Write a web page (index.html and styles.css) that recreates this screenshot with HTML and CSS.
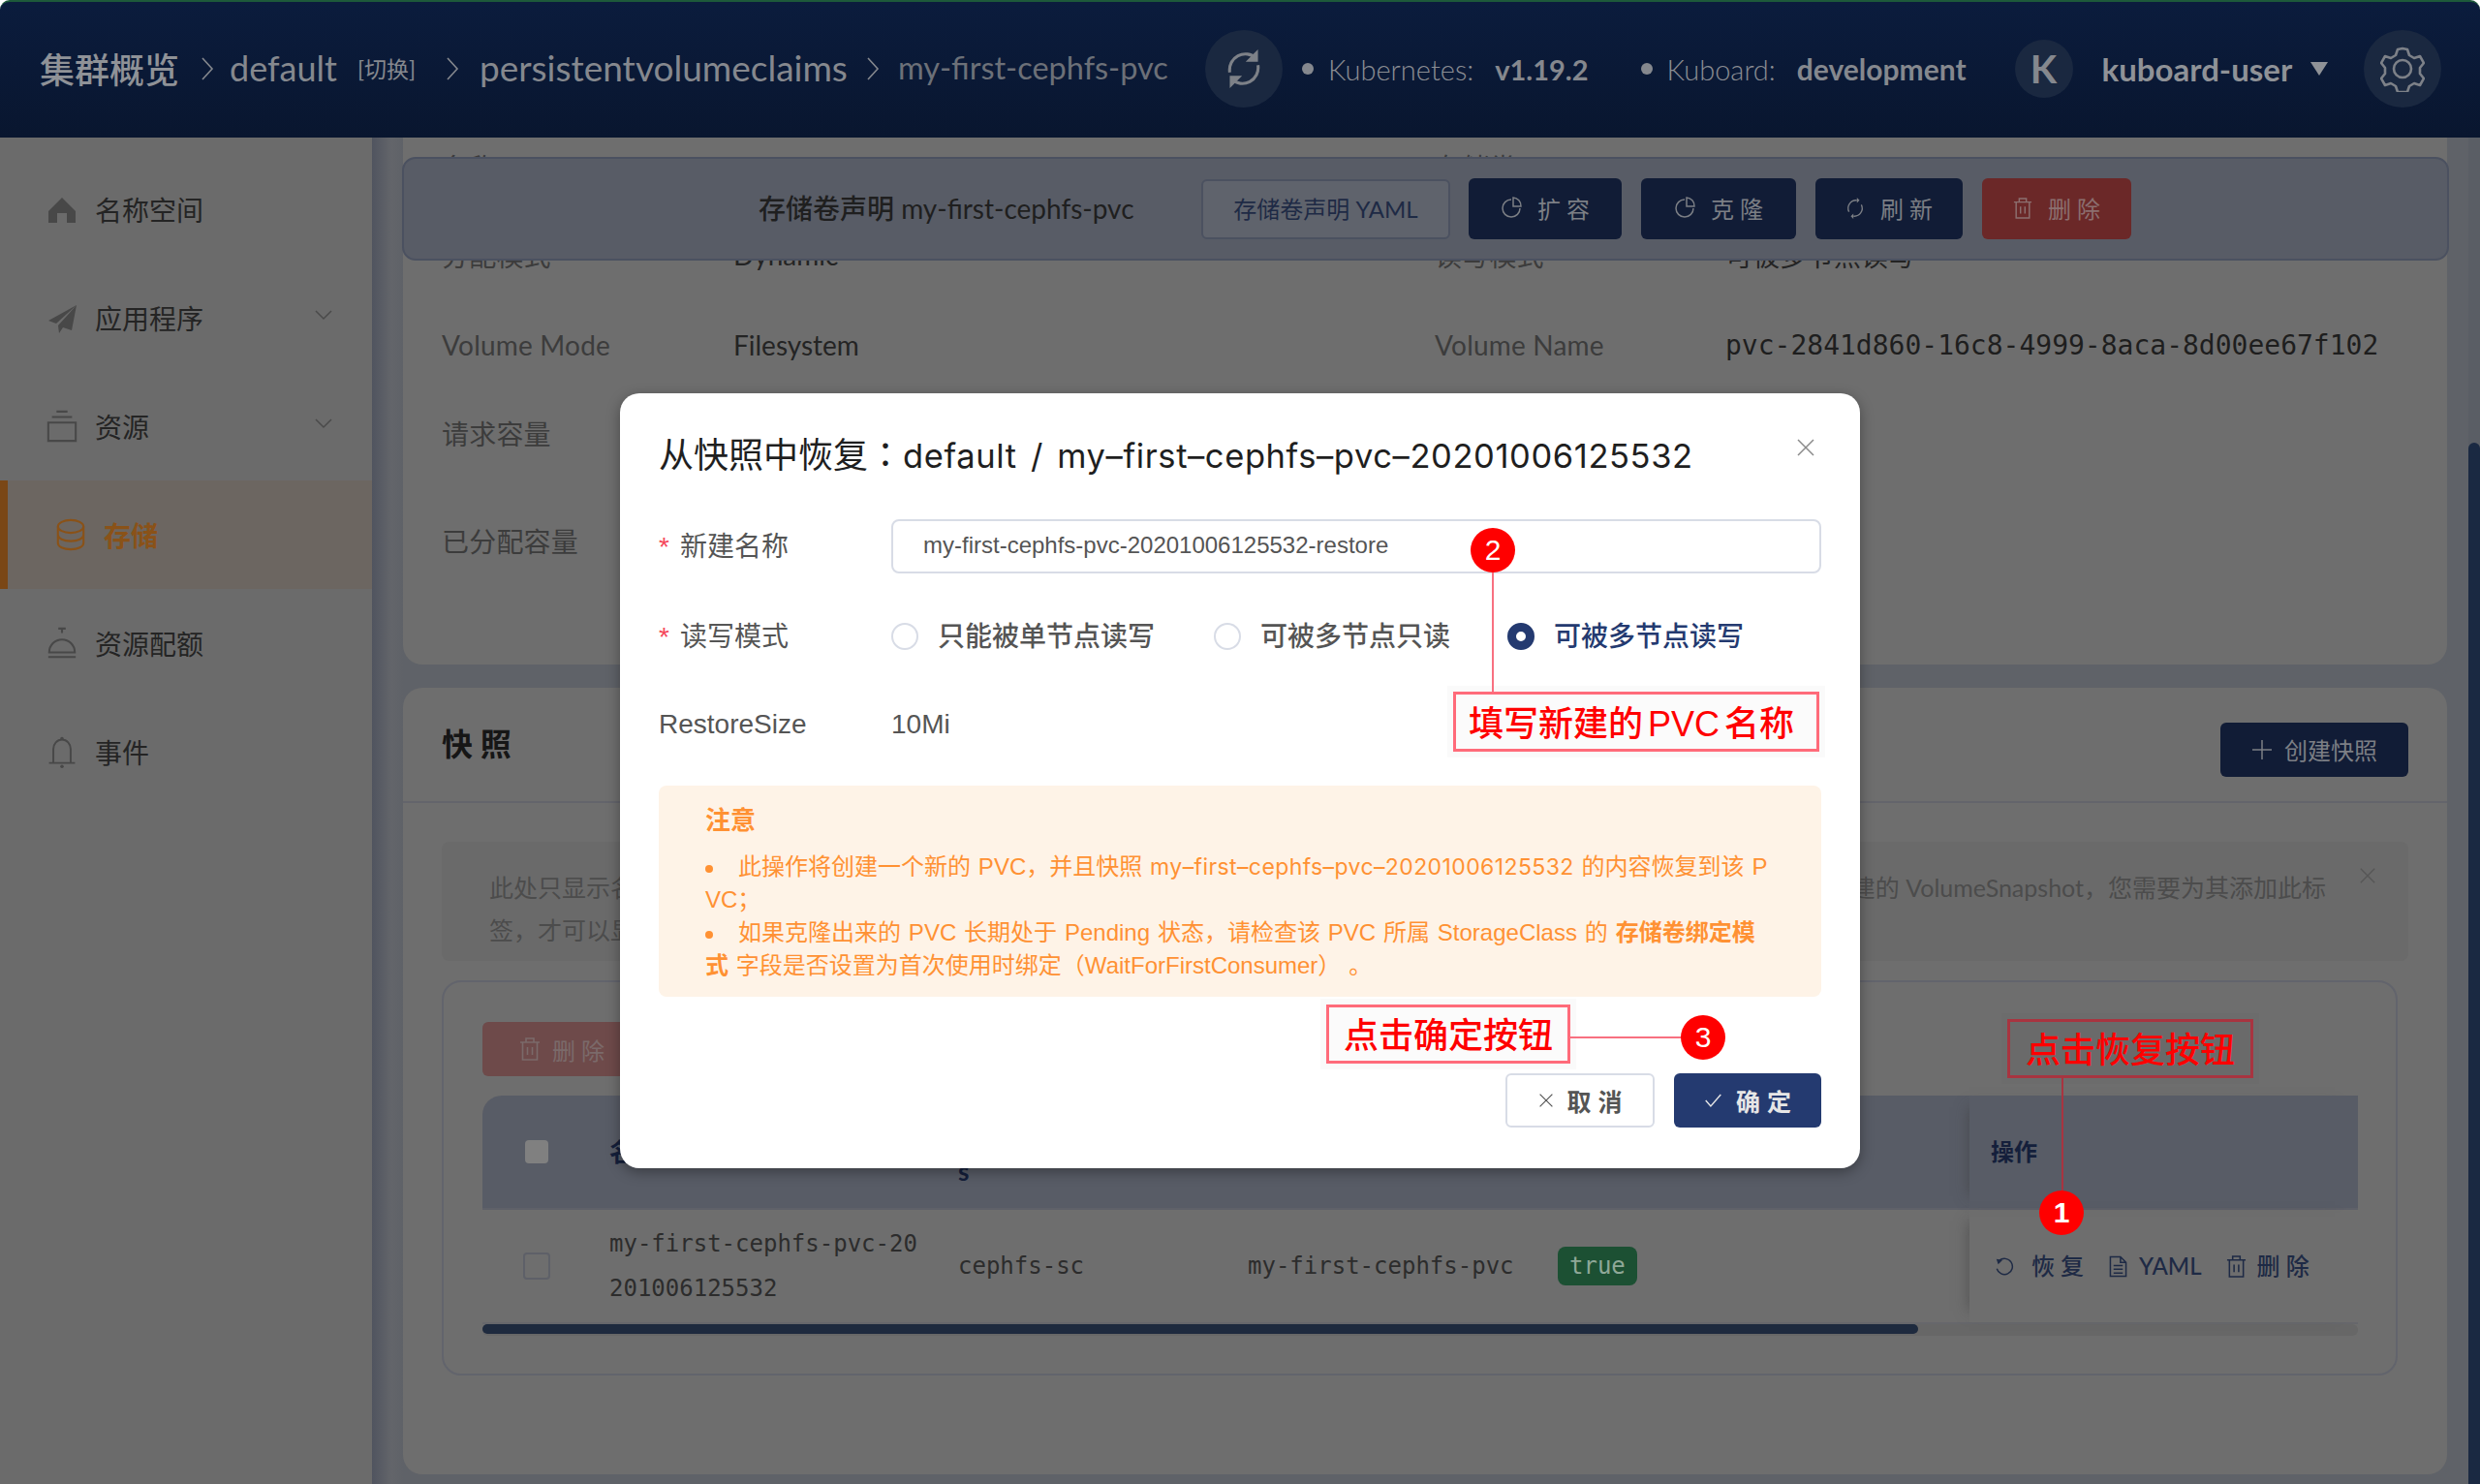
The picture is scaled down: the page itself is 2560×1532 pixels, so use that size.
FILE: index.html
```html
<!DOCTYPE html>
<html>
  <head>
    <title>存储卷声明 my-first-cephfs-pvc</title>
    <link rel="stylesheet" href="styles.css">
  </head>
  <body>
    <svg class="defs" width="0" height="0">
      <symbol id="i-chevron" viewBox="0 0 14 28"><path d="M2 3l10 11L2 25" fill="none" stroke="currentColor" stroke-width="1.6"/></symbol>
      <symbol id="i-down" viewBox="0 0 20 12"><path d="M2 2l8 8 8-8" fill="none" stroke="currentColor" stroke-width="1.5"/></symbol>
      <symbol id="i-pie" viewBox="0 0 22 24"><path d="M11 3a9 9 0 1 0 9 9" fill="none" stroke="currentColor" stroke-width="1.5"/><path d="M13 1v9h8a8.500 8.500 0 0 0-8-9z" fill="none" stroke="currentColor" stroke-width="1.5"/></symbol>
      <symbol id="i-sync" viewBox="0 0 22 24"><path d="M4 16A9 9 0 0 1 13 3M18 8a9 9 0 0 1-9 13" fill="none" stroke="currentColor" stroke-width="1.5"/><path d="M13 0v6l3-3zM9 24v-6l-3 3z" fill="currentColor"/></symbol>
      <symbol id="i-trash" viewBox="0 0 22 26"><path d="M1 6h20M7 6V2h8v4M3.500 6v18h15V6M8.500 11v8M13.500 11v8" fill="none" stroke="currentColor" stroke-width="1.600"/></symbol>
      <symbol id="i-undo" viewBox="0 0 22 22"><path d="M5 5a9 9 0 1 1-2.500 9" fill="none" stroke="currentColor" stroke-width="1.600"/><path d="M2 3l7 1-5 5z" fill="currentColor"/></symbol>
      <symbol id="i-doc" viewBox="0 0 20 24"><path d="M1.500 1.500h11l6 6v15h-17zM12.500 1.500v6h6M5 11h10M5 15h10M5 19h10" fill="none" stroke="currentColor" stroke-width="1.600"/></symbol>
      <symbol id="i-close" viewBox="0 0 20 20"><path d="M2 2l16 16M18 2L2 18" fill="none" stroke="currentColor" stroke-width="1.500"/></symbol>
    </svg>

    <header class="topbar">
      <span class="crumb crumb-home">集群概览</span>
      <svg class="sep"><use href="#i-chevron"/></svg>
      <span class="crumb crumb-ns">default</span>
      <span class="crumb crumb-switch">[切换]</span>
      <svg class="sep sep-two"><use href="#i-chevron"/></svg>
      <span class="crumb crumb-kind">persistentvolumeclaims</span>
      <svg class="sep sep-three"><use href="#i-chevron"/></svg>
      <span class="crumb crumb-name">my-first-cephfs-pvc</span>
      <span class="round-btn refresh">
        <svg width="40" height="44" viewBox="0 0 22 24"><path d="M3 14A9 9 0 0 1 18 6M19 10a9 9 0 0 1-15 8" fill="none" stroke="currentColor" stroke-width="1.700"/><path d="M19 1v7h-7zM3 23v-7h7z" fill="currentColor"/></svg>
      </span>
      <span class="dot dot-one"></span>
      <span class="stat-label">Kubernetes:</span>
      <span class="stat-value">v1.19.2</span>
      <span class="dot dot-two"></span>
      <span class="stat-label">Kuboard:</span>
      <span class="stat-value stat-big">development</span>
      <span class="avatar">K</span>
      <span class="user">kuboard-user</span>
      <span class="caret"></span>
      <span class="round-btn gear">
        <svg width="46" height="48" viewBox="0 0 46 48"><path d="M23 3l5 1 2 6 5 3 6-2 4 7-4 5v6l4 5-4 7-6-2-5 3-2 6H18l-2-6-5-3-6 2-4-7 4-5v-6l-4-5 4-7 6 2 5-3 2-6z" fill="none" stroke="currentColor" stroke-width="2.600" stroke-linejoin="round"/><circle cx="23" cy="24" r="9" fill="none" stroke="currentColor" stroke-width="2.600"/></svg>
      </span>
    </header>

    <div class="layout">
      <aside class="sidebar">
        <div class="nav-item">
          <svg class="nav-icon" viewBox="0 0 32 32"><path d="M16 4l14 14v12H21V20H11v10H2V18z" fill="currentColor"/></svg>
          <span>名称空间</span>
        </div>
        <div class="nav-item">
          <svg class="nav-icon" viewBox="0 0 32 32"><path d="M31 3L2 19l8 3zM31 3L12 24l1 8 4-6 9 3z" fill="currentColor"/></svg>
          <span>应用程序</span>
          <svg class="nav-arrow"><use href="#i-down"/></svg>
        </div>
        <div class="nav-item">
          <svg class="nav-icon" viewBox="0 0 32 36"><path d="M10 2h12M5 8h22M1 14h30v20H1z" fill="none" stroke="currentColor" stroke-width="2.200"/></svg>
          <span>资源</span>
          <svg class="nav-arrow"><use href="#i-down"/></svg>
        </div>
        <div class="nav-item nav-active">
          <svg class="nav-icon" viewBox="0 0 32 36"><g fill="none" stroke="currentColor" stroke-width="2.200"><ellipse cx="16" cy="9" rx="14" ry="7"/><path d="M2 9v9c0 4 6 7 14 7s14-3 14-7V9M2 18v9c0 4 6 7 14 7s14-3 14-7v-9"/></g></svg>
          <span>存储</span>
        </div>
        <div class="nav-item">
          <svg class="nav-icon" viewBox="0 0 32 36"><path d="M12 2h8M16 2v5M2 28a14 14 0 0 1 28 0zM1 33h30" fill="none" stroke="currentColor" stroke-width="2.200"/></svg>
          <span>资源配额</span>
        </div>
        <div class="nav-item">
          <svg class="nav-icon" viewBox="0 0 32 38"><path d="M6 32V16a10 11 0 0 1 20 0v16M1 32h30" fill="none" stroke="currentColor" stroke-width="2.200"/><circle cx="16" cy="4" r="2" fill="currentColor"/><circle cx="16" cy="36" r="2" fill="currentColor"/></svg>
          <span>事件</span>
        </div>
      </aside>

      <main class="content">
        <div class="scrolled">
          <section class="card info-card">
            <div class="info-grid">
              <span class="label">名称</span><span class="value">my-first-cephfs-pvc</span>
              <span class="label">存储类</span><span class="value value-far">cephfs-sc</span>
              <span class="label">分配模式</span><span class="value">Dynamic</span>
              <span class="label">读写模式</span><span class="value">可被多节点读写</span>
              <span class="label">Volume Mode</span><span class="value">Filesystem</span>
              <span class="label">Volume Name</span><span class="value value-mono">pvc-2841d860-16c8-4999-8aca-8d00ee67f102</span>
              <span class="label">请求容量</span><span class="value">10Mi</span>
              <span></span><span></span>
              <span class="label">已分配容量</span><span class="value">10Mi</span>
              <span></span><span></span>
            </div>
          </section>

          <section class="card snap-card">
            <div class="snap-head">
              <h2>快 照</h2>
              <button class="btn btn-primary btn-create">
                <svg width="22" height="22" viewBox="0 0 22 22"><path d="M11 1v20M1 11h20" fill="none" stroke="currentColor" stroke-width="1.500"/></svg>
                创建快照
              </button>
            </div>
            <div class="snap-body">
              <div class="alert">
                <svg class="alert-close"><use href="#i-close"/></svg>
                <div class="alert-line"><span>此处只显示名称空间下带有标签的快照，</span><span>创建的 VolumeSnapshot，您需要为其添加此标</span></div>
                <div class="alert-line"><span>签，才可以显示在此列表中。</span></div>
              </div>
              <div class="table-frame">
                <button class="btn btn-faded">
                  <svg width="22" height="26"><use href="#i-trash"/></svg>
                  删 除
                </button>
                <div class="table">
                  <div class="table-row table-head">
                    <span class="cell-check"><span class="check check-head"></span></span>
                    <span>名称</span>
                    <span>StorageClas<br>s</span>
                    <span>PVC</span>
                    <span>ReadyToUse</span>
                    <span class="cell-fixed">操作</span>
                  </div>
                  <div class="table-row table-data">
                    <span class="cell-check"><span class="check"></span></span>
                    <span>my-first-cephfs-pvc-20<br>201006125532</span>
                    <span>cephfs-sc</span>
                    <span>my-first-cephfs-pvc</span>
                    <span><span class="tag">true</span></span>
                    <span class="cell-fixed actions">
                      <a class="act act-undo"><svg width="20" height="20"><use href="#i-undo"/></svg>恢 复</a>
                      <a class="act act-yaml"><svg width="19" height="23"><use href="#i-doc"/></svg>YAML</a>
                      <a class="act act-del"><svg width="21" height="25"><use href="#i-trash"/></svg>删 除</a>
                    </span>
                  </div>
                  <div class="table-scroll"><div class="table-thumb"></div></div>
                </div>
              </div>
            </div>
          </section>
        </div>

        <div class="toolbar">
          <span class="toolbar-title"><b>存储卷声明</b> my-first-cephfs-pvc</span>
          <button class="btn btn-ghost">存储卷声明 YAML</button>
          <button class="btn btn-primary btn-w-expand"><svg width="22" height="24"><use href="#i-pie"/></svg>扩 容</button>
          <button class="btn btn-primary btn-w-clone"><svg width="22" height="24"><use href="#i-pie"/></svg>克 隆</button>
          <button class="btn btn-primary btn-w-refresh"><svg width="20" height="24"><use href="#i-sync"/></svg>刷 新</button>
          <button class="btn btn-danger"><svg width="20" height="24"><use href="#i-trash"/></svg>删 除</button>
        </div>

        <div class="scrollbar"><div class="scrollbar-thumb"></div></div>
      </main>
    </div>

    <div class="dialog">
      <div class="dialog-head">
        <h3>从快照中恢复<span class="title-colon">：</span><span class="snap-name">default / my–first–cephfs–pvc–20201006125532</span></h3>
        <svg class="dialog-close"><use href="#i-close"/></svg>
      </div>
      <div class="form-row row-name">
        <label><i>*</i>新建名称</label>
        <div class="input">my-first-cephfs-pvc-20201006125532-restore</div>
      </div>
      <div class="form-row row-mode">
        <label><i>*</i>读写模式</label>
        <div class="radios">
          <span class="radio radio-first"><span class="radio-dot"></span>只能被单节点读写</span>
          <span class="radio radio-second"><span class="radio-dot"></span>可被多节点只读</span>
          <span class="radio radio-on"><span class="radio-dot"></span>可被多节点读写</span>
        </div>
      </div>
      <div class="form-row row-size">
        <label>RestoreSize</label>
        <div>10Mi</div>
      </div>
      <div class="notice">
        <div class="notice-title">注意</div>
        <div class="notice-text"><span class="bullet"></span>此操作将创建一个新的 PVC，并且快照 <span class="snap-name">my–first–cephfs–pvc–20201006125532</span> 的内容恢复到该 P<br>VC；</div>
        <div class="notice-text"><span class="bullet"></span>如果克隆出来的 PVC 长期处于 Pending 状态，请检查该 PVC 所属 StorageClass 的 <b>存储卷绑定模<br>式</b> 字段是否设置为首次使用时绑定（WaitForFirstConsumer） 。</div>
      </div>
      <div class="dialog-foot">
        <button class="dlg-btn dlg-cancel"><svg width="16" height="16"><use href="#i-close"/></svg>取 消</button>
        <button class="dlg-btn dlg-ok"><svg width="19" height="16" viewBox="0 0 22 18"><path d="M2 9l6 7L20 2" fill="none" stroke="currentColor" stroke-width="1.600"/></svg>确 定</button>
      </div>
    </div>

    <!-- red annotations drawn on top of the screenshot -->
    <div class="note-box note-one">点击恢复按钮</div>
    <div class="note-line line-one"></div>
    <div class="note-num num-one">1</div>
    <div class="note-box note-two">填写新建的 PVC 名称</div>
    <div class="note-line line-two"></div>
    <div class="note-num num-two">2</div>
    <div class="note-box note-three">点击确定按钮</div>
    <div class="note-line line-three"></div>
    <div class="note-num num-three">3</div>
  </body>
</html>
```

FILE: styles.css
```css
* {
  box-sizing: border-box;
}

html,
body {
  height: 100%;
}

body {
  position: relative;
  margin: 0;
  overflow: hidden;
  background: #fff;
  color: #2a2a2a;
  font-family: Lato, "Noto Sans CJK SC", sans-serif;
  font-size: 28px;
}

.defs {
  position: absolute;
}

button {
  font-family: inherit;
}

/* top bar */
.topbar {
  display: flex;
  align-items: center;
  height: 142px;
  padding: 0 0 2px 41px;
  border-top: 2px solid #1d5a3a;
  border-radius: 10px 10px 0 0;
  background: linear-gradient(#0b1c3d, #09162f);
  color: #85888e;
}

.crumb {
  margin-bottom: 3px;
}

.crumb-home {
  font-size: 36px;
  font-weight: 500;
  color: #8f9297;
}

.crumb-ns {
  font-size: 36px;
}

.crumb-kind {
  font-size: 37px;
}

.crumb-name {
  font-size: 32.5px;
  color: #6c7078;
}

.crumb-switch {
  margin-left: 21px;
  font-size: 23px;
}

.sep {
  width: 14px;
  height: 28px;
  margin: 0 16px 0 22px;
  color: #85888e;
}

.sep-two {
  margin: 0 21px 0 31px;
}

.sep-three {
  margin: 0 19px;
}

.round-btn {
  display: flex;
  align-items: center;
  justify-content: center;
  width: 80px;
  height: 80px;
  border-radius: 50%;
  background: #1a2840;
  color: #7d8188;
}

.refresh {
  margin-left: 38px;
}

.gear {
  margin-left: 37px;
}

.dot {
  width: 12px;
  height: 12px;
  margin-right: 15px;
  border-radius: 50%;
  background: #85888e;
}

.dot-one {
  margin-left: 20px;
}

.dot-two {
  margin-left: 54px;
}

.stat-label {
  margin-right: 22px;
  font-size: 29px;
  font-weight: 300;
  color: #8a8d93;
}

.stat-value {
  font-size: 29px;
  font-weight: 700;
}

.stat-big {
  font-size: 30px;
}

.avatar {
  display: flex;
  align-items: center;
  justify-content: center;
  width: 60px;
  height: 60px;
  margin-left: 50px;
  border-radius: 50%;
  background: #1a2840;
  font-size: 40px;
  font-weight: 700;
}

.user {
  margin-left: 30px;
  font-size: 33px;
  font-weight: 700;
  color: #8f9297;
}

.caret {
  width: 0;
  height: 0;
  margin-left: 19px;
  border-top: 14px solid #8f9297;
  border-left: 9px solid transparent;
  border-right: 9px solid transparent;
}

/* page under the bar */
.layout {
  display: flex;
  height: 1390px;
}

.sidebar {
  flex: none;
  width: 384px;
  padding-top: 18px;
  background: #6b6b6b;
  color: #242424;
}

.nav-item {
  display: flex;
  align-items: center;
  height: 112px;
  padding-left: 48px;
}

.nav-icon {
  width: 32px;
  height: 34px;
  margin-right: 18px;
  color: #484848;
}

.nav-arrow {
  width: 20px;
  height: 12px;
  margin-left: auto;
  margin-right: 40px;
  margin-bottom: 6px;
  color: #4a4a4a;
}

.nav-active {
  padding-left: 49px;
  border-left: 8px solid #7a4716;
  background: #6c6661;
  color: #8a5218;
  font-weight: 700;
}

.nav-active .nav-icon {
  color: #8a5218;
}

.content {
  position: relative;
  flex: 1;
  min-width: 0;
  overflow: hidden;
  background: linear-gradient(90deg, #50545f 0, #63656a 20px, #5f6268 32px);
}

.scrolled {
  margin-top: -26px;
  padding: 0 34px 0 32px;
}

.card {
  border-radius: 20px;
  background: #6e6e6e;
}

.info-card {
  height: 570px;
  margin-bottom: 24px;
  padding-left: 40px;
  overflow: hidden;
}

.info-grid {
  display: grid;
  grid-template-columns: 301px 724px 300px 1fr;
  grid-template-rows: 112px 70px 116px 66px 156px;
  align-items: center;
}

.label {
  color: #3c3c3c;
  letter-spacing: 0.2px;
}

.value {
  color: #242424;
}

.value-far {
  padding-left: 46px;
}

.value-mono {
  font-family: "DejaVu Sans Mono", monospace;
  font-size: 28px;
  color: #1e1e1e;
}

.snap-card {
  height: 812px;
}

.snap-head {
  display: flex;
  align-items: center;
  justify-content: space-between;
  height: 119px;
  padding: 0 40px;
  border-bottom: 2px solid #63646b;
}

.snap-head h2 {
  margin: 0 0 6px;
  font-size: 32px;
  font-weight: 700;
  color: #161616;
}

.btn {
  display: inline-flex;
  align-items: center;
  justify-content: center;
  border: 0;
  border-radius: 6px;
  font-size: 24px;
}

.btn-primary {
  height: 60px;
  background: #111c36;
  color: #7c7f85;
}

.btn-primary svg,
.btn-danger svg {
  margin-right: 16px;
}

.btn-create {
  width: 194px;
  height: 56px;
  margin-top: 10px;
  font-size: 24px;
}

.btn-create svg {
  margin-right: 12px;
}

.snap-body {
  padding: 40px 40px 0;
}

.alert {
  position: relative;
  height: 123px;
  padding: 25px 49px 0;
  border-radius: 8px;
  background: #6a6a6a;
  color: #4c4c4c;
  font-size: 25px;
  line-height: 44px;
}

.alert-line {
  display: flex;
  justify-content: space-between;
  padding-right: 36px;
}

.alert-close {
  position: absolute;
  top: 26px;
  right: 33px;
  width: 18px;
  height: 18px;
  color: #565656;
}

.table-frame {
  width: 2019px;
  height: 408px;
  margin-top: 20px;
  padding: 41px 40px 0;
  border: 2px solid #62646c;
  border-radius: 20px;
}

.btn-faded {
  width: 164px;
  height: 56px;
  background: #6e4a4a;
  color: #7b6a6a;
}

.btn-faded svg {
  margin-right: 12px;
}

.table {
  width: 1936px;
  margin-top: 20px;
}

.table-row {
  display: grid;
  grid-template-columns: 131px 360px 299px 320px 1fr 401px;
  align-items: center;
}

.table-head {
  height: 116px;
  border-top-left-radius: 20px;
  background: #585c66;
  color: #141f3b;
  font-size: 26px;
  font-weight: 700;
  line-height: 40px;
}

.table-data {
  height: 120px;
  border-top: 2px solid #5f6169;
  border-bottom: 2px solid #66676b;
  font-family: "DejaVu Sans Mono", monospace;
  font-size: 24px;
  line-height: 46px;
  color: #2c2c2c;
}

.table-data > span,
.table-head > span {
  display: block;
}

.cell-check {
  display: flex !important;
  justify-content: center;
  padding-right: 19px;
}

.check {
  display: block;
  width: 28px;
  height: 28px;
  border: 2px solid #5e6068;
  border-radius: 4px;
}

.check-head {
  width: 24px;
  height: 24px;
  border: 0;
  background: #808080;
}

.cell-fixed {
  align-self: stretch;
  display: flex !important;
  align-items: center;
  padding-left: 22px;
  font-size: 24px;
  box-shadow: -12px 0 14px -12px rgba(60, 60, 60, 0.6);
}

.tag {
  display: inline-block;
  height: 40px;
  padding: 0 12px;
  border-radius: 8px;
  background: #1c5033;
  color: #8fa898;
  line-height: 40px;
}

.actions {
  font-family: Lato, "Noto Sans CJK SC", sans-serif;
  color: #1e2a45;
  font-weight: 500;
}

.act {
  display: inline-flex;
  align-items: center;
}

.act svg {
  margin-right: 12px;
}

.act-undo {
  margin-left: 4px;
}

.act-undo svg {
  margin-right: 18px;
}

.act-yaml {
  margin-left: 26px;
}

.act-del {
  margin-left: 25px;
}

.act-del svg {
  margin-right: 11px;
}

.table-scroll {
  height: 12px;
  border-radius: 6px;
  background: #676767;
}

.table-thumb {
  width: 1482px;
  height: 10px;
  border-radius: 5px;
  background: #1e2a3e;
}

/* sticky bar over the info card */
.toolbar {
  position: absolute;
  top: 20px;
  left: 31px;
  display: flex;
  align-items: center;
  width: 2113px;
  height: 107px;
  padding-left: 366px;
  border: 2px solid #4b5160;
  border-radius: 14px;
  background: #585c66;
}

.toolbar-title {
  width: 457px;
  margin-bottom: 3px;
  font-size: 28px;
  color: #1f1f1f;
  white-space: nowrap;
}

.toolbar-title b {
  font-weight: 500;
}

.toolbar .btn {
  padding-bottom: 3px;
}

.btn-ghost {
  width: 257px;
  height: 62px;
  border: 2px solid #4b5160;
  background: #5f636c;
  color: #1e2a45;
}

.btn-primary.btn-w-expand {
  width: 158px;
  height: 63px;
  margin-left: 19px;
}

.btn-w-clone {
  width: 160px;
  height: 63px;
  margin-left: 20px;
}

.btn-w-refresh {
  width: 152px;
  height: 63px;
  margin-left: 20px;
}

.btn-danger {
  width: 154px;
  height: 63px;
  margin-left: 20px;
  background: #6b2828;
  color: #8c6f6f;
}

.scrollbar {
  position: absolute;
  top: 0;
  right: 0;
  width: 12px;
  height: 100%;
  background: #5a5e65;
}

.scrollbar-thumb {
  height: 1075px;
  margin-top: 315px;
  border-radius: 6px 6px 0 0;
  background: #1a2942;
}

/* dialog */
.dialog {
  position: absolute;
  top: 406px;
  left: 640px;
  width: 1280px;
  height: 800px;
  padding: 0 40px;
  border-radius: 20px;
  background: #fff;
  box-shadow: 0 4px 14px rgba(0, 0, 0, 0.35);
  color: #555;
  font-family: "Liberation Sans", "Noto Sans CJK SC", sans-serif;
}

.dialog-head {
  display: flex;
  align-items: center;
  justify-content: space-between;
  height: 124px;
}

.dialog-head h3 {
  margin: 0 0 3px;
  font-size: 36px;
  font-weight: 400;
  color: #1f1f1f;
  white-space: nowrap;
}

.title-colon {
  font-family: "Noto Sans CJK TC", sans-serif;
}

.snap-name {
  font-family: Inter, "Liberation Sans", sans-serif;
  font-size: 34.5px;
  letter-spacing: 0.6px;
  word-spacing: 4px;
}

.dialog-close {
  width: 20px;
  height: 20px;
  margin-right: 6px;
  margin-bottom: 12px;
  color: #8a8a8a;
}

.form-row {
  display: flex;
  align-items: center;
  height: 56px;
}

.form-row label {
  width: 240px;
  margin-bottom: 4px;
}

.form-row i {
  margin-right: 11px;
  color: #f5475b;
  font-style: normal;
}

.row-name {
  margin-top: 6px;
}

.row-mode {
  margin-top: 37px;
}

.row-size {
  margin-top: 35px;
}

.row-size label {
  margin-bottom: 0;
}

.input {
  width: 960px;
  height: 56px;
  padding-left: 31px;
  border: 2px solid #d8dce6;
  border-radius: 8px;
  font-size: 24px;
  line-height: 50px;
}

.radios {
  display: flex;
  margin-bottom: 4px;
  font-weight: 500;
}

.radio {
  display: flex;
  align-items: center;
  white-space: nowrap;
}

.radio-dot {
  width: 28px;
  height: 28px;
  margin-top: 4px;
  margin-right: 20px;
  border: 2px solid #d8dce6;
  border-radius: 50%;
}

.radio-second {
  margin-left: 61px;
}

.radio-on {
  margin-left: 59px;
  color: #243a70;
}

.radio-on .radio-dot {
  border: 9px solid #243a70;
}

.notice {
  height: 218px;
  margin-top: 35px;
  padding: 19px 48px 0;
  border-radius: 8px;
  background: #fef3e7;
  color: #ff9133;
  font-size: 24px;
  line-height: 34px;
}

.notice-title {
  margin-bottom: 14px;
  font-size: 26px;
  font-weight: 700;
}

.notice-text {
  white-space: nowrap;
  word-spacing: 1.2px;
}

.notice .snap-name {
  font-size: 23px;
  letter-spacing: 0.4px;
  word-spacing: 1.2px;
}

.bullet {
  display: inline-block;
  width: 8px;
  height: 8px;
  margin-right: 26px;
  vertical-align: middle;
  border-radius: 50%;
  background: #ff9133;
}

.dialog-foot {
  display: flex;
  justify-content: flex-end;
  gap: 20px;
  margin-top: 79px;
}

.dlg-btn {
  display: flex;
  align-items: center;
  justify-content: center;
  height: 56px;
  border-radius: 6px;
  font-size: 25px;
  font-weight: 700;
  font-family: "Liberation Sans", "Noto Sans CJK SC", sans-serif;
}

.dlg-btn svg {
  margin-right: 14px;
}

.dlg-cancel {
  width: 154px;
  border: 2px solid #d8dce6;
  background: #fff;
  color: #555;
}

.dlg-ok {
  width: 152px;
  border: 0;
  background: #243a70;
  color: #e6e6e6;
}

/* annotations */
.note-box {
  position: absolute;
  display: flex;
  align-items: center;
  justify-content: center;
  padding-bottom: 3px;
  border: 3px solid #ff6b7a;
  background: #fbfbfb;
  box-shadow: 0 0 0 6px #fafafa;
  color: #f00;
  font-family: "Liberation Sans", "Noto Sans CJK SC", sans-serif;
  font-size: 36px;
  font-weight: 500;
  white-space: nowrap;
}

.note-one {
  top: 1052px;
  left: 2072px;
  width: 254px;
  height: 61px;
  border-color: #a83440;
  background: #6a6a6a;
  box-shadow: 0 0 0 6px #6c6c6c;
}

.note-two {
  top: 714px;
  left: 1500px;
  width: 378px;
  height: 62px;
  justify-content: flex-start;
  padding-left: 13px;
  word-spacing: -5px;
}

.note-three {
  top: 1037px;
  left: 1369px;
  width: 252px;
  height: 61px;
}

.note-line {
  position: absolute;
  background: #f87080;
}

.line-one {
  top: 1113px;
  left: 2128px;
  width: 2px;
  height: 120px;
  background: #a83440;
}

.line-two {
  top: 590px;
  left: 1540px;
  width: 2px;
  height: 124px;
}

.line-three {
  top: 1070px;
  left: 1621px;
  width: 116px;
  height: 2px;
}

.note-num {
  position: absolute;
  width: 46px;
  height: 46px;
  border-radius: 50%;
  background: #f00;
  color: #fff;
  font-family: "Liberation Sans", sans-serif;
  font-size: 30px;
  line-height: 46px;
  text-align: center;
}

.num-one {
  top: 1229px;
  left: 2105px;
  font-weight: 700;
}

.num-two {
  top: 545px;
  left: 1518px;
}

.num-three {
  top: 1048px;
  left: 1735px;
}
```
